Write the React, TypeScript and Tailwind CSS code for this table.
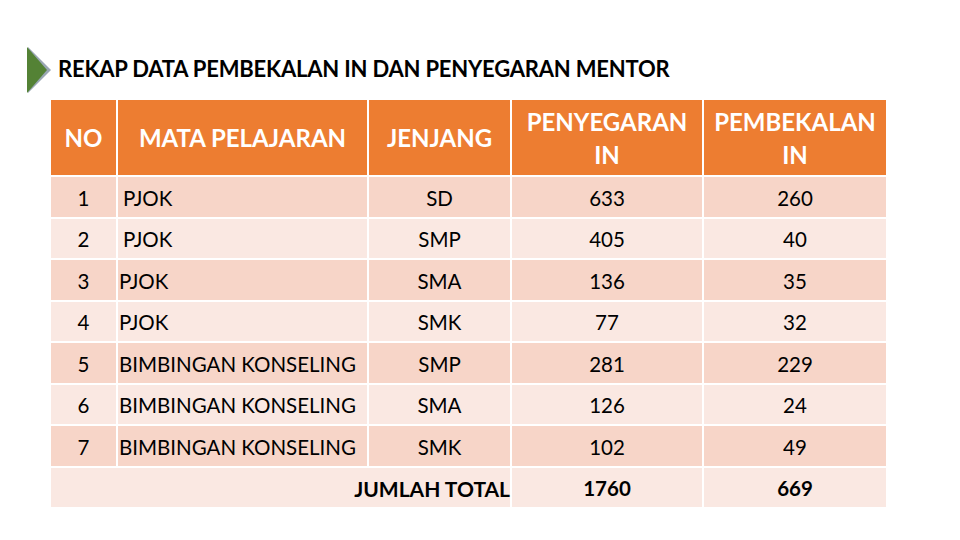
const rows = [
  { no: "1", mapel: "PJOK", jenjang: "SD", peny: "633", pemb: "260", indent: true },
  { no: "2", mapel: "PJOK", jenjang: "SMP", peny: "405", pemb: "40", indent: true },
  { no: "3", mapel: "PJOK", jenjang: "SMA", peny: "136", pemb: "35" },
  { no: "4", mapel: "PJOK", jenjang: "SMK", peny: "77", pemb: "32" },
  { no: "5", mapel: "BIMBINGAN KONSELING", jenjang: "SMP", peny: "281", pemb: "229" },
  { no: "6", mapel: "BIMBINGAN KONSELING", jenjang: "SMA", peny: "126", pemb: "24" },
  { no: "7", mapel: "BIMBINGAN KONSELING", jenjang: "SMK", peny: "102", pemb: "49" },
];

function Arrow() {
  return (
    <svg width="26" height="46" viewBox="0 0 26 46" className="shrink-0">
      <polygon points="1,0 24,23 1,46" fill="#9aa7b4" />
      <polygon points="0,0 20,23 0,46" fill="#548235" />
    </svg>
  );
}

export default function App() {
  return (
    <div
      className="w-[960px] h-[540px] bg-white relative overflow-hidden text-black"
      style={{ fontFamily: "Lato, 'Liberation Sans', sans-serif" }}
    >
      <div className="flex items-center pt-[47px] pl-[27px] gap-[5px]">
        <Arrow />
        <h1 className="text-[22px] font-bold leading-none tracking-[-0.2px] -mt-[2px]">
          REKAP DATA PEMBEKALAN IN DAN PENYEGARAN MENTOR
        </h1>
      </div>

      <div className="ml-[51px] mt-[7px] grid grid-cols-[65px_249px_141px_190px_182px] gap-[2px]">
        <div className="h-[75px] bg-[#ed7d31] text-white font-bold text-[24px] flex items-center justify-center">NO</div>
        <div className="h-[75px] bg-[#ed7d31] text-white font-bold text-[24px] flex items-center justify-center">MATA PELAJARAN</div>
        <div className="h-[75px] bg-[#ed7d31] text-white font-bold text-[24px] flex items-center justify-center">JENJANG</div>
        <div className="h-[75px] bg-[#ed7d31] text-white font-bold text-[24px] flex items-center justify-center text-center leading-[33px]">
          PENYEGARAN<br />IN
        </div>
        <div className="h-[75px] bg-[#ed7d31] text-white font-bold text-[24px] flex items-center justify-center text-center leading-[33px]">
          PEMBEKALAN<br />IN
        </div>

        {rows.map((r, i) => {
          const bg = i % 2 === 0 ? "bg-[#f7d5c8]" : "bg-[#fae8e2]";
          return [
            <div key={r.no + "a"} className={`h-[39.5px] pt-[3px] ${bg} text-[20.5px] flex items-center justify-center`}>{r.no}</div>,
            <div key={r.no + "b"} className={`h-[39.5px] pt-[3px] ${bg} text-[20.5px] flex items-center ${r.indent ? "pl-[5px]" : "pl-[1px]"}`}>{r.mapel}</div>,
            <div key={r.no + "c"} className={`h-[39.5px] pt-[3px] ${bg} text-[20.5px] flex items-center justify-center`}>{r.jenjang}</div>,
            <div key={r.no + "d"} className={`h-[39.5px] pt-[3px] ${bg} text-[20.5px] flex items-center justify-center`}>{r.peny}</div>,
            <div key={r.no + "e"} className={`h-[39.5px] pt-[3px] ${bg} text-[20.5px] flex items-center justify-center`}>{r.pemb}</div>,
          ];
        })}

        <div className="col-span-3 h-[39.5px] pt-[3px] bg-[#fae8e2] text-[21px] font-bold flex items-center justify-end pr-0 whitespace-nowrap">JUMLAH TOTAL</div>
        <div className="h-[39.5px] pt-[3px] bg-[#fae8e2] text-[20.5px] font-bold flex items-center justify-center">1760</div>
        <div className="h-[39.5px] pt-[3px] bg-[#fae8e2] text-[20.5px] font-bold flex items-center justify-center">669</div>
      </div>
    </div>
  );
}
